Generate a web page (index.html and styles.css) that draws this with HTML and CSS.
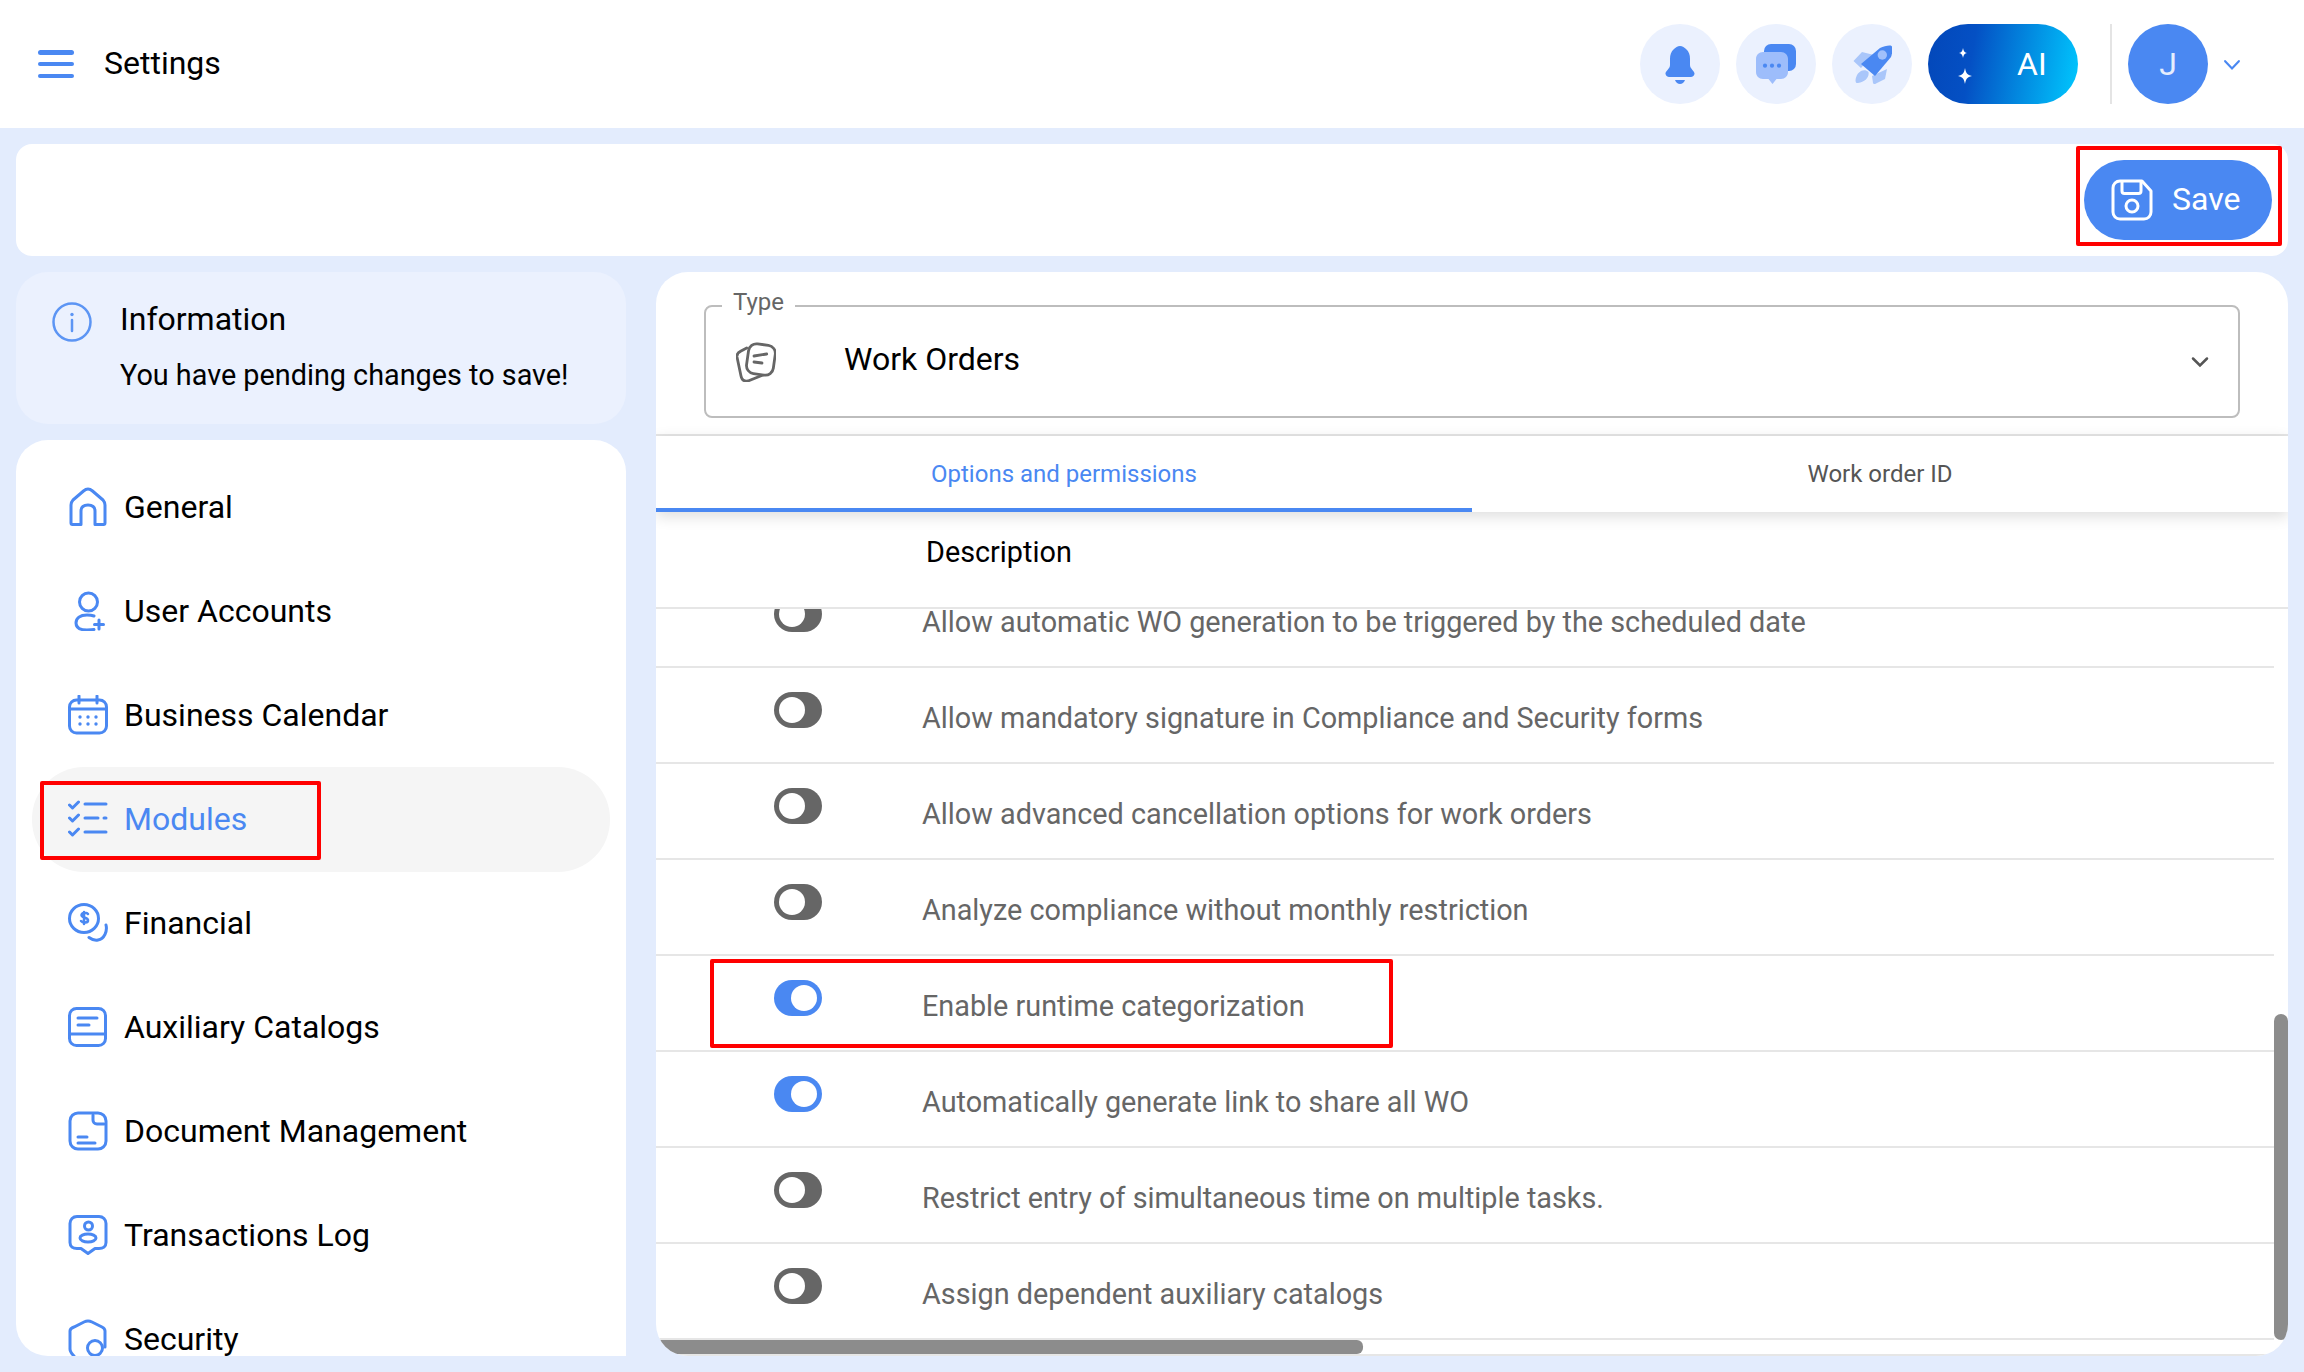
FILE: index.html
```html
<!DOCTYPE html>
<html lang="en">
<head>
<meta charset="utf-8">
<title>Settings</title>
<link rel="stylesheet" href="styles.css">
</head>
<body>
<header class="topbar">
  <button class="burger" aria-label="Menu"><span></span><span></span><span></span></button>
  <h1 class="page-title">Settings</h1>
  <div class="top-actions">
    <div class="round-btn">
      <svg class="ico40" viewBox="0 0 40 40"><path fill="#4a88f2" d="M20 2c2.500 0 4.500 1.500 6 3 3 2.500 4 6 4 10v6c0 4 5 6 4.500 9-.5 2.500-2.500 3-5.500 3H11c-3 0-5-.5-5.500-3C5 27 10 25 10 21v-6c0-4 1-7.500 4-10 1.500-1.500 3.500-3 6-3z"/><path fill="#4a88f2" d="M15 36h10c-1 2.500-2.800 4-5 4s-4-1.500-5-4z"/></svg>
    </div>
    <div class="round-btn">
      <svg class="ico40" viewBox="0 0 40 40"><rect x="8" y="0" width="32" height="27" rx="7" fill="#4a88f2"/><path fill="#9dbdfb" d="M7 8h18c4 0 7 3 7 7v13c0 4-3 7-7 7h-4.500l-4 5-4-5H7c-4 0-7-3-7-7V15c0-4 3-7 7-7z"/><circle cx="9" cy="21.700" r="2.100" fill="#4a88f2"/><circle cx="16" cy="21.700" r="2.100" fill="#4a88f2"/><circle cx="23" cy="21.700" r="2.100" fill="#4a88f2"/></svg>
    </div>
    <div class="round-btn">
      <svg class="ico40" viewBox="0 0 40 40"><path fill="#a9c6fa" d="M1.500 17 10 8l11 2.700L9 24zM21 39l-1-7 15-7-2 10-8 4c-2 1.500-3.500 1.500-4 0zM16.500 28c1 5-3.500 10-10.500 11-4 .5-2.500-6 0-9.500 3-3.500 7.500-4.500 10.500-1.500z"/><path fill="#4a88f2" d="M28 4c4-2 10-3 11.500-2C41 3 40.500 9 39 13L23 32 9 20z"/><circle cx="30.300" cy="11" r="4.700" fill="#a1c0fb"/></svg>
    </div>
    <div class="ai-btn">
      <svg class="sparks" viewBox="0 0 24 48"><path fill="#fff" d="M11 8c.5 3 1.500 4.500 4 5-2.500.5-3.500 2-4 5-.5-3-1.500-4.500-4-5 2.500-.5 3.500-2 4-5zM13 28c1 5 2 7 7 8-5 1-6 3-7 8-1-5-2-7-7-8 5-1 6-3 7-8z"/></svg>
      <span>AI</span>
    </div>
    <div class="divider"></div>
    <div class="avatar">J</div>
    <svg class="user-chevron" viewBox="0 0 20 14"><path d="M2 2.500 10 11l8-8.500" fill="none" stroke="#4a88f2" stroke-width="2.500" stroke-linecap="round"/></svg>
  </div>
</header>

<main class="page">
  <section class="toolbar">
    <button class="save-btn">
      <svg class="save-ico" viewBox="0 0 42 42"><path fill="none" stroke="#fff" stroke-width="3" stroke-linejoin="round" d="M9 2h22l9 10v21c0 4-3 7-7 7H9c-4 0-7-3-7-7V9c0-4 3-7 7-7z"/><path fill="none" stroke="#fff" stroke-width="3" d="M11 2v10c0 1.500 1 2.500 2.500 2.500h14c1.500 0 2.500-1 2.500-2.500V2"/><circle cx="21" cy="27" r="6" fill="none" stroke="#fff" stroke-width="3"/></svg>
      <span>Save</span>
      <i class="mark mark-save"></i>
    </button>
  </section>

  <div class="content">
    <aside class="side">
      <div class="info-card">
        <svg class="info-ico" viewBox="0 0 40 40"><circle cx="20" cy="20" r="18.500" fill="none" stroke="#5c95f4" stroke-width="2.500"/><path d="M20 18v11" stroke="#5c95f4" stroke-width="2.500" stroke-linecap="round"/><circle cx="20" cy="12.500" r="1.700" fill="#5c95f4"/></svg>
        <div class="info-text">
          <div class="info-title">Information</div>
          <div class="info-msg">You have pending changes to save!</div>
        </div>
      </div>

      <nav class="nav-card">
        <a class="nav-item">
          <svg class="nav-ico" viewBox="0 0 40 40"><path fill="none" stroke="#4a88f2" stroke-width="3" stroke-linejoin="round" d="M3 36V18c0-2 .7-3.500 2-5L15.500 4c3-2.600 6-2.600 9 0L35 13c1.300 1.500 2 3 2 5v18c0 1-.6 1.500-1.500 1.500H27V24c0-4-2.500-6-7-6s-7 2-7 6v13.500H4.500C3.600 37.500 3 37 3 36z"/></svg>
          <span>General</span>
        </a>
        <a class="nav-item">
          <svg class="nav-ico" viewBox="0 0 40 40"><ellipse cx="20.500" cy="11" rx="9" ry="9" fill="none" stroke="#4a88f2" stroke-width="3"/><path fill="none" stroke="#4a88f2" stroke-width="3" stroke-linecap="round" d="M26 25c-2-.7-4-1-7-1-7 0-11 3-11 8s4 7 11 7c3 0 5 0 7-.5"/><path stroke="#4a88f2" stroke-width="3" stroke-linecap="round" d="M31 29v9M26.500 33.500h9"/></svg>
          <span>User Accounts</span>
        </a>
        <a class="nav-item">
          <svg class="nav-ico" viewBox="0 0 40 40"><rect x="1.500" y="5" width="37" height="33" rx="7" fill="none" stroke="#4a88f2" stroke-width="3"/><path d="M2 14h36M11 1v7M29 1v7" stroke="#4a88f2" stroke-width="3" stroke-linecap="round"/><g fill="#4a88f2"><circle cx="12" cy="22" r="1.700"/><circle cx="20" cy="22" r="1.700"/><circle cx="28" cy="22" r="1.700"/><circle cx="12" cy="29" r="1.700"/><circle cx="20" cy="29" r="1.700"/><circle cx="28" cy="29" r="1.700"/></g></svg>
          <span>Business Calendar</span>
        </a>
        <a class="nav-item active">
          <svg class="nav-ico" viewBox="0 0 40 40"><path fill="none" stroke="#4a88f2" stroke-width="3" stroke-linecap="round" stroke-linejoin="round" d="M1.500 6l3 3 6-6M1.500 19l3 3 6-6M1.500 33l3 3 6-6M17 5h21M17 19h13M36 19h2M17 33h21"/></svg>
          <span>Modules</span>
          <i class="mark mark-nav"></i>
        </a>
        <a class="nav-item">
          <svg class="nav-ico" viewBox="0 0 40 40"><ellipse cx="16" cy="15.500" rx="14.500" ry="14" fill="none" stroke="#4a88f2" stroke-width="3"/><path fill="none" stroke="#4a88f2" stroke-width="3" stroke-linecap="round" d="M38 22c1.500 6-1.500 14-8 15-4 .7-7-1-9-2.500"/><path fill="none" stroke="#4a88f2" stroke-width="2.500" stroke-linecap="round" d="M20 11c-1-1.500-6-2-6.500 1-.4 3 6 2 6.500 5 .3 3-5 3.500-7 1M16 9v12"/></svg>
          <span>Financial</span>
        </a>
        <a class="nav-item">
          <svg class="nav-ico" viewBox="0 0 40 40"><rect x="1.500" y="1.500" width="36" height="37" rx="7" fill="none" stroke="#4a88f2" stroke-width="3"/><path d="M2 27h35M10 11h19M10 18h11" stroke="#4a88f2" stroke-width="3" stroke-linecap="round"/></svg>
          <span>Auxiliary Catalogs</span>
        </a>
        <a class="nav-item">
          <svg class="nav-ico" viewBox="0 0 40 40"><path fill="none" stroke="#4a88f2" stroke-width="3" d="M10 2h20c4 0 8 3 8 8v20c0 5-4 8-8 8H10c-4 0-8-3-8-8V10c0-5 4-8 8-8z"/><path fill="none" stroke="#4a88f2" stroke-width="3" stroke-linecap="round" d="M25 4v5c0 2 1.500 4 4 4h7M10 26h9M10 32h17"/></svg>
          <span>Document Management</span>
        </a>
        <a class="nav-item">
          <svg class="nav-ico" viewBox="0 0 40 40"><path fill="none" stroke="#4a88f2" stroke-width="3" stroke-linejoin="round" d="M9 1.500h22c4 0 7 3 7 7v19c0 4-3 6-7 6h-4l-7 5-7-5H9c-4 0-7-2-7-6v-19c0-4 3-7 7-7z"/><circle cx="20.500" cy="11" r="4" fill="none" stroke="#4a88f2" stroke-width="3"/><ellipse cx="20" cy="23" rx="8" ry="4" fill="none" stroke="#4a88f2" stroke-width="3"/></svg>
          <span>Transactions Log</span>
        </a>
        <a class="nav-item">
          <svg class="nav-ico" viewBox="0 0 40 40"><path fill="none" stroke="#4a88f2" stroke-width="3" stroke-linecap="round" d="M37 28V12c0-2-1-3-3-4L24 3c-3-1.500-5-1.500-8 0L6 8c-3 1-4 2-4 4v18c0 3 2 5 4 7"/><circle cx="27" cy="29" r="7.500" fill="none" stroke="#4a88f2" stroke-width="3"/></svg>
          <span>Security</span>
        </a>
      </nav>
    </aside>

    <section class="panel">
      <div class="select-wrap">
        <div class="select">
          <span class="select-label">Type</span>
          <svg class="select-ico" viewBox="0 0 40 40"><path fill="none" stroke="#666" stroke-width="2.800" stroke-linecap="round" d="M10.700 6 5 9c-3 1.500-4.500 3-4 6l4 19c.8 4 3.500 5.500 7 5l15-6"/><rect x="11.500" y="2.500" width="27" height="30" rx="8" fill="#fff" stroke="#666" stroke-width="2.800" transform="rotate(8 25 17)"/><path d="M18 14l12.700-2M18 20l8 1" stroke="#666" stroke-width="2.800" stroke-linecap="round"/></svg>
          <span class="select-value">Work Orders</span>
          <svg class="select-chev" viewBox="0 0 18 12"><path d="m2 2.500 7 7 7-7" fill="none" stroke="#555" stroke-width="2.500" stroke-linecap="round"/></svg>
        </div>
      </div>

      <div class="tabs">
        <div class="tab on">Options and permissions</div>
        <div class="tab">Work order ID</div>
      </div>

      <div class="table-head"><span>Description</span></div>

      <div class="rows-clip">
        <div class="rows">
          <div class="row"><i class="toggle"></i><span>Allow automatic WO generation to be triggered by the scheduled date</span></div>
          <div class="row"><i class="toggle"></i><span>Allow mandatory signature in Compliance and Security forms</span></div>
          <div class="row"><i class="toggle"></i><span>Allow advanced cancellation options for work orders</span></div>
          <div class="row"><i class="toggle"></i><span>Analyze compliance without monthly restriction</span></div>
          <div class="row"><i class="toggle on"></i><span>Enable runtime categorization</span><i class="mark mark-row"></i></div>
          <div class="row"><i class="toggle on"></i><span>Automatically generate link to share all WO</span></div>
          <div class="row"><i class="toggle"></i><span>Restrict entry of simultaneous time on multiple tasks.</span></div>
          <div class="row"><i class="toggle"></i><span>Assign dependent auxiliary catalogs</span></div>
        </div>
        <div class="bar-h"></div>
        <div class="bar-v"></div>
      </div>
    </section>
  </div>
</main>
</body>
</html>
```
FILE: styles.css
```css
* { box-sizing: border-box; }
html, body { margin: 0; height: 100%; }
body {
  width: 2304px;
  height: 1372px;
  overflow: hidden;
  background: #e3ecfd;
  font-family: Roboto, "Noto Sans", sans-serif;
  font-size: 32px;
  color: #000;
}

/* top bar */
.topbar {
  height: 128px;
  background: #fff;
  display: flex;
  align-items: center;
  padding-left: 38px;
}
.burger {
  width: 36px;
  height: 28px;
  padding: 0;
  border: 0;
  background: none;
  display: flex;
  flex-direction: column;
  justify-content: space-between;
}
.burger span { display: block; height: 4.5px; border-radius: 3px; background: #4a88f2; }
.page-title { margin: -2px 0 0 30px; font-size: 32px; font-weight: 400; line-height: 1; }
.top-actions { margin-left: auto; display: flex; align-items: center; gap: 16px; }
.round-btn {
  width: 80px;
  height: 80px;
  border-radius: 50%;
  background: #ebf1fe;
  display: flex;
  align-items: center;
  justify-content: center;
}
.ico40 { width: 40px; height: 40px; display: block; flex: none; }
.ai-btn {
  width: 150px;
  height: 80px;
  border-radius: 40px;
  background: linear-gradient(100deg, #0347b9 0%, #0450c4 30%, #00c9ff 100%);
  color: #fff;
  display: flex;
  align-items: center;
  font-size: 32px;
  padding-left: 24px;
}
.sparks { width: 24px; height: 48px; }
.ai-btn span { margin-left: 41px; margin-top: -1px; }
.divider { width: 2px; height: 80px; background: #e4e4e4; margin-left: 16px; }
.avatar {
  width: 80px;
  height: 80px;
  border-radius: 50%;
  background: #4a88f2;
  color: #e6eefd;
  display: flex;
  align-items: center;
  justify-content: center;
  font-size: 32px;
}
.user-chevron { width: 18px; height: 12px; margin: 2px 63px 0 -1px; }

/* page */
.page { padding: 16px; display: flex; flex-direction: column; gap: 16px; height: 1244px; }
.toolbar {
  height: 112px;
  background: #fff;
  border-radius: 16px;
  display: flex;
  align-items: center;
  justify-content: flex-end;
  padding-right: 16px;
  flex: none;
}
.save-btn {
  position: relative;
  width: 188px;
  height: 80px;
  border: 0;
  border-radius: 40px;
  background: #4a88f2;
  color: #fff;
  font: 400 32px Roboto, sans-serif;
  display: flex;
  align-items: center;
  padding: 0 0 0 27px;
  gap: 19px;
}
.save-btn span { margin-top: -2px; }
.save-ico { width: 42px; height: 42px; flex: none; }

/* red annotation boxes */
.mark { position: absolute; display: block; border: 4px solid #f00; border-radius: 2px; pointer-events: none; }
.mark-save { left: -8px; top: -14px; width: 206px; height: 100px; }
.mark-nav { left: 8px; top: 14px; width: 281px; height: 79px; }
.mark-row { left: 54px; top: 3px; width: 683px; height: 89px; }

.content { flex: 1; display: flex; gap: 30px; min-height: 0; }

/* sidebar */
.side { width: 610px; flex: none; display: flex; flex-direction: column; gap: 16px; min-height: 0; }
.info-card {
  height: 152px;
  flex: none;
  background: #ebf1fe;
  border-radius: 32px;
  display: flex;
  padding: 30px 0 0 36px;
  gap: 28px;
}
.info-ico { width: 40px; height: 40px; flex: none; }
.info-text { margin-top: -1px; }
.info-title { font-size: 32px; line-height: 36px; }
.info-msg { font-size: 28.8px; line-height: 36px; margin-top: 20px; white-space: nowrap; }

.nav-card {
  flex: 1;
  min-height: 0;
  background: #fff;
  border-radius: 32px 32px 0 32px;
  overflow: hidden;
  padding: 15px 16px 0;
}
.nav-item {
  position: relative;
  height: 104px;
  display: flex;
  align-items: center;
  gap: 16px;
  padding-left: 36px;
  border-radius: 52px;
  line-height: 32px;
}
.nav-item.active { background: #f5f5f5; color: #4a88f2; height: 105px; margin-bottom: -1px; padding-bottom: 1px; }
.nav-ico { width: 40px; height: 40px; flex: none; }

/* right panel */
.panel {
  position: relative;
  flex: 1;
  min-width: 0;
  background: #fff;
  border-radius: 32px;
  overflow: hidden;
  display: flex;
  flex-direction: column;
}
.select-wrap { height: 164px; flex: none; padding: 33px 48px 0; border-bottom: 2px solid #e6e6e6; }
.select {
  position: relative;
  height: 113px;
  border: 2px solid #bdbdbd;
  border-radius: 8px;
  display: flex;
  align-items: center;
  padding: 0 29px 0 30px;
}
.select-label {
  position: absolute;
  left: 16px;
  top: -19px;
  padding: 0 11px;
  background: #fff;
  color: #666;
  font-size: 24px;
  line-height: 28px;
}
.select-ico { width: 40px; height: 40px; flex: none; }
.select-value { margin-left: 68px; margin-top: -6px; }
.select-chev { width: 18px; height: 12px; margin-left: auto; }

.tabs {
  height: 76px;
  flex: none;
  display: flex;
  position: relative;
  z-index: 1;
  background: #fff;
  box-shadow: 0 4px 14px rgba(0, 0, 0, .14);
}
.tab {
  flex: 1;
  display: flex;
  align-items: center;
  justify-content: center;
  font-size: 24px;
  color: #555;
  padding-bottom: 1px;
}
.tab.on { color: #4a88f2; box-shadow: inset 0 -4px 0 #4a88f2; }

.table-head {
  height: 97px;
  flex: none;
  display: flex;
  align-items: center;
  padding: 0 0 15px 270px;
  border-bottom: 2px solid #e6e6e6;
  font-size: 28.8px;
}
.rows-clip { position: relative; flex: 1; min-height: 0; overflow: hidden; border-bottom: 2px solid #e6e6e6; }
.rows { margin: -37px 14px 0 0; }
.row {
  position: relative;
  height: 96px;
  display: flex;
  align-items: center;
  padding-left: 118px;
  border-bottom: 2px solid #e6e6e6;
  color: #666;
  font-size: 28.8px;
  line-height: 28px;
}
.row span { margin-left: 100px; margin-top: 6px; }
.toggle {
  position: relative;
  display: block;
  width: 48px;
  height: 36px;
  margin-top: -11px;
  border-radius: 18px;
  background: #666;
  flex: none;
}
.toggle::after {
  content: "";
  position: absolute;
  top: 5px;
  left: 5px;
  width: 26px;
  height: 26px;
  border-radius: 50%;
  background: #fff;
}
.toggle.on { background: #4a88f2; }
.toggle.on::after { left: 17px; }

.bar-h {
  position: absolute;
  left: 4px;
  bottom: 0;
  width: 703px;
  height: 14px;
  border-radius: 0 7px 7px 16px;
  background: #8c8c8c;
}
.bar-v {
  position: absolute;
  right: 0;
  top: 405px;
  width: 14px;
  height: 326px;
  border-radius: 7px;
  background: #8c8c8c;
}
```
